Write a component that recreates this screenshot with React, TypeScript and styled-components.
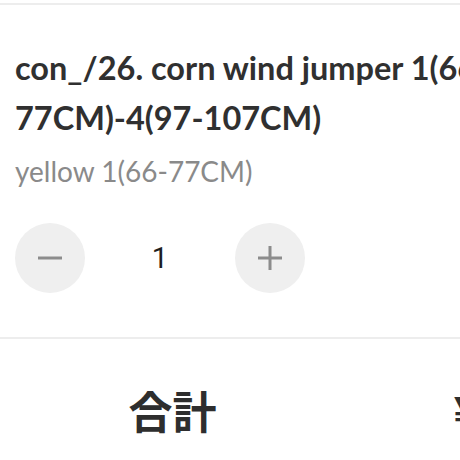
import { FC, useState } from 'react';
import styled, { createGlobalStyle } from 'styled-components';

const GlobalStyle = createGlobalStyle`
    html, body {
        margin: 0;
        padding: 0;
        background: #fff;
        overflow: hidden;
    }
    body {
        font-family: Lato, 'Noto Sans CJK JP', sans-serif;
        color: #333;
    }
`;

const Page = styled.div`
    width: 690px;
    border-top: 2px solid #ededed;
    margin-top: 3px;
`;

const CartItem = styled.section`
    padding: 38px 15px 44px;
    border-bottom: 2px solid #ededed;
`;

const ItemInfo = styled.div`
    max-width: 540px;
`;

const ItemTitle = styled.h2`
    margin: 0;
    font-size: 32.5px;
    font-weight: 700;
    line-height: 50px;
    color: #303030;
`;

const ItemVariant = styled.div`
    margin-top: 8px;
    font-size: 28px;
    line-height: 40px;
    color: #8a8a8a;
`;

const Stepper = styled.div`
    display: flex;
    align-items: center;
    margin-top: 32px;
`;

const StepButton = styled.button`
    width: 70px;
    height: 70px;
    border: none;
    border-radius: 50%;
    background: #efefef;
    display: flex;
    align-items: center;
    justify-content: center;
    padding: 0;
    cursor: pointer;
`;

const Count = styled.span`
    width: 150px;
    text-align: center;
    font-family: Roboto, sans-serif;
    font-size: 29px;
    color: #1e1e1e;
`;

const TotalRow = styled.div`
    display: grid;
    grid-template-columns: 1fr 1fr;
    align-items: center;
    padding: 39px 0;
`;

const TotalLabel = styled.div`
    text-align: center;
    font-family: 'Noto Sans CJK JP', sans-serif;
    font-size: 44px;
    font-weight: 700;
    color: #2e2e2e;
`;

const TotalPrice = styled.div`
    padding-left: 16px;
    text-align: center;
    font-family: 'Noto Sans CJK JP', sans-serif;
    font-size: 44px;
    font-weight: 700;
    color: #2e2e2e;
`;

const Minus = () => (
    <svg width='24' height='24' viewBox='0 0 24 24'>
        <path d='M0 12h24' stroke='#8c8c8c' strokeWidth='3' />
    </svg>
);

const Plus = () => (
    <svg width='24' height='24' viewBox='0 0 24 24'>
        <path d='M0 12h24M12 0v24' stroke='#8c8c8c' strokeWidth='3' />
    </svg>
);

const App: FC = () => {
    const [qty, setQty] = useState<number>(1);

    return (
        <>
            <GlobalStyle />
            <Page>
                <CartItem>
                    <ItemInfo>
                        <ItemTitle>con_/26. corn wind jumper 1(66-77CM)-4(97-107CM)</ItemTitle>
                        <ItemVariant>yellow 1(66-77CM)</ItemVariant>
                    </ItemInfo>
                    <Stepper>
                        <StepButton onClick={() => setQty(Math.max(1, qty - 1))}>
                            <Minus />
                        </StepButton>
                        <Count>{qty}</Count>
                        <StepButton onClick={() => setQty(qty + 1)}>
                            <Plus />
                        </StepButton>
                    </Stepper>
                </CartItem>
                <TotalRow>
                    <TotalLabel>合計</TotalLabel>
                    <TotalPrice>¥8,800</TotalPrice>
                </TotalRow>
            </Page>
        </>
    );
};

export default App;
